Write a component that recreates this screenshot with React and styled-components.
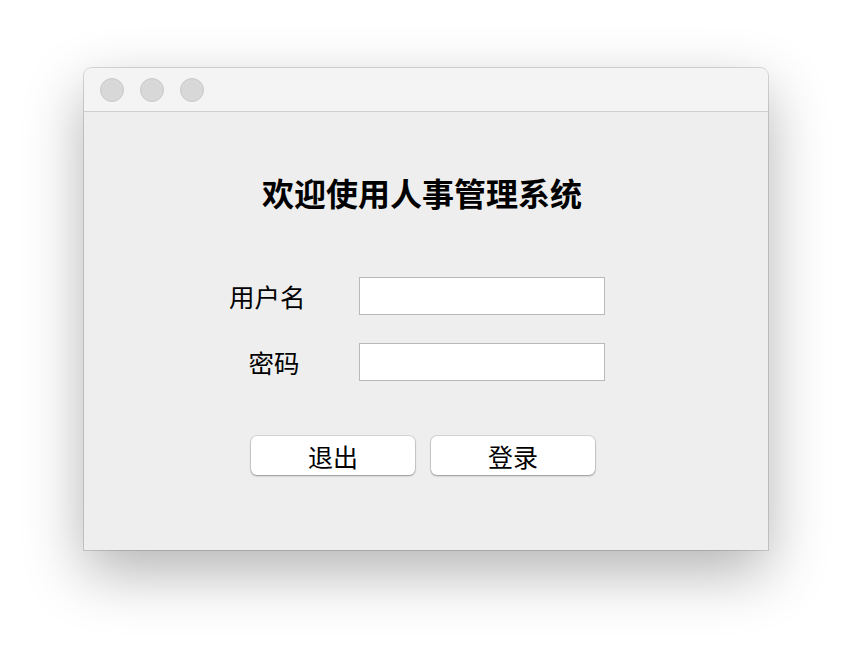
import styled, { createGlobalStyle } from "styled-components";

const GlobalStyle = createGlobalStyle`
  html, body {
    margin: 0;
    padding: 0;
    background: #ffffff;
  }
  body {
    font-family: "Noto Sans CJK SC", "Noto Sans", sans-serif;
  }
`;

const Page = styled.div`
  width: 852px;
  height: 650px;
  padding: 68px 0 0 84px;
  box-sizing: border-box;
`;

const Window = styled.div`
  width: 684px;
  height: 482px;
  display: flex;
  flex-direction: column;
  background: #eeeeee;
  border-radius: 8px 8px 0 0;
  box-shadow: 0 0 0 1px rgba(0, 0, 0, 0.14), 0 22px 60px rgba(0, 0, 0, 0.3);
  overflow: hidden;
`;

const TitleBar = styled.div`
  height: 43px;
  flex: none;
  display: flex;
  align-items: center;
  gap: 16px;
  padding-left: 16px;
  background: #f4f4f4;
  border-bottom: 1px solid #cfcfcf;
`;

const Light = styled.span`
  width: 22px;
  height: 22px;
  border-radius: 50%;
  background: #d8d8d8;
  border: 1px solid #c9c9c9;
`;

const Body = styled.div`
  flex: 1;
  display: flex;
  flex-direction: column;
  padding-top: 60px;
`;

const Heading = styled.h1`
  margin: 0;
  padding-right: 8px;
  text-align: center;
  font-size: 32px;
  line-height: 40px;
  font-weight: 700;
  color: #000;
`;

const Form = styled.div`
  margin: 65px 0 0 145px;
  display: grid;
  grid-template-columns: 76px 246px;
  column-gap: 54px;
  row-gap: 28px;
`;

const Label = styled.label`
  text-align: center;
  font-size: 25.5px;
  line-height: 38px;
  color: #000;
  white-space: nowrap;
  padding-left: ${(p) => p.$shift || 0}px;
`;

const Input = styled.input`
  height: 38px;
  box-sizing: border-box;
  border: 1px solid #b9b9b9;
  background: #fff;
  margin: 0;
  outline: none;
`;

const Buttons = styled.div`
  margin-top: 55px;
  display: flex;
  justify-content: center;
  gap: 16px;
  padding-right: 6px;
`;

const Button = styled.button`
  width: 164px;
  height: 39px;
  border: none;
  border-radius: 6px;
  background: #ffffff;
  box-shadow: 0 0 0 1px rgba(0, 0, 0, 0.1), 0 1px 2px rgba(0, 0, 0, 0.3);
  font-family: "Noto Sans CJK SC", sans-serif;
  font-size: 25px;
  color: #000;
  padding: 0;
`;

export default function App() {
  return (
    <>
      <GlobalStyle />
      <Page>
        <Window>
          <TitleBar>
            <Light />
            <Light />
            <Light />
          </TitleBar>
          <Body>
            <Heading>欢迎使用人事管理系统</Heading>
            <Form>
              <Label>用户名</Label>
              <Input type="text" />
              <Label $shift={14}>密码</Label>
              <Input type="password" />
            </Form>
            <Buttons>
              <Button>退出</Button>
              <Button>登录</Button>
            </Buttons>
          </Body>
        </Window>
      </Page>
    </>
  );
}
